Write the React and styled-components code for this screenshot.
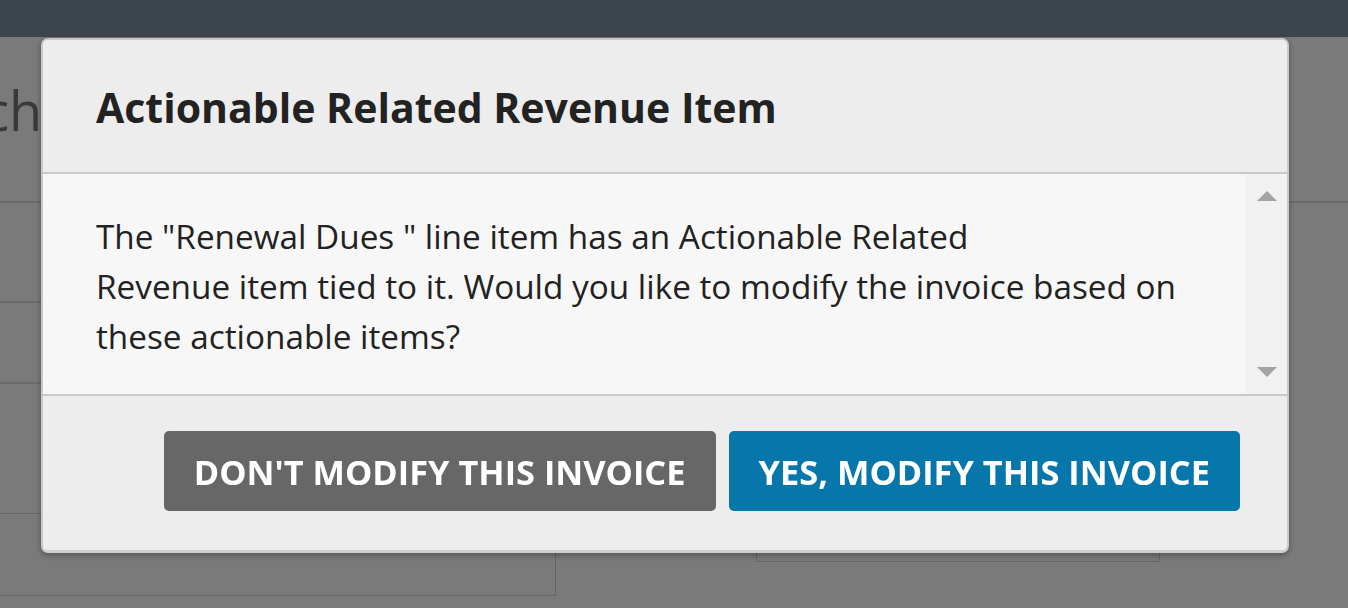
import React from 'react'
import styled, { createGlobalStyle } from 'styled-components'

const GlobalStyle = createGlobalStyle`
  html, body {
    margin: 0;
    padding: 0;
    background: #ffffff;
    font-family: "Open Sans", "Liberation Sans", sans-serif;
    overflow: hidden;
  }
  * { box-sizing: border-box; }
`

export default function App() {
  return (
    <>
      <GlobalStyle />
      <Page>
        <TopBar />
        <PageHead>
          <PageTitle>Batch</PageTitle>
        </PageHead>
        <Content>
          <LeftCol>
            <Row $h={98} $line={2} />
            <Row $h={79} $line={2} />
            <Row $h={129} $line={1} />
            <Panel />
          </LeftCol>
          <RightCol>
            <SideBox />
          </RightCol>
        </Content>
      </Page>

      <Overlay />

      <Modal role="dialog" aria-labelledby="modal-title">
        <Header>
          <Title id="modal-title">Actionable Related Revenue Item</Title>
        </Header>
        <Body>
          <Message>
            The "Renewal Dues " line item has an Actionable Related
            <br />
            Revenue item tied to it. Would you like to modify the invoice based on
            these actionable items?
          </Message>
          <Scrollbar>
            <Arrow viewBox="0 0 20 10">
              <polygon points="0,10 10,0 20,10" />
            </Arrow>
            <Arrow viewBox="0 0 20 10">
              <polygon points="0,0 20,0 10,10" />
            </Arrow>
          </Scrollbar>
        </Body>
        <Footer>
          <Button $variant="secondary">Don't modify this invoice</Button>
          <Button $variant="primary">Yes, modify this invoice</Button>
        </Footer>
      </Modal>
    </>
  )
}

// page behind the dialog
const Page = styled.div`
  width: 1348px;
  height: 608px;
  background: #ffffff;
`

const TopBar = styled.div`
  height: 37px;
  background: #8190a0;
`

const PageHead = styled.div`
  height: 164px;
  padding-top: 38px;
  overflow: hidden;
`

const PageTitle = styled.h1`
  margin: 0 0 0 -101px;
  font-size: 54px;
  font-weight: 400;
  line-height: 70px;
  color: #777777;
  white-space: nowrap;
`

const Content = styled.div`
  display: flex;
  border-top: 2px solid #e0e0e0;
`

const LeftCol = styled.div`
  width: 556px;
  display: flex;
  flex-direction: column;
`

const Row = styled.div`
  height: ${(p) => p.$h + p.$line}px;
  border-bottom: ${(p) => p.$line}px solid ${(p) => (p.$line > 1 ? '#e0e0e0' : '#d6d6d6')};
`

const Panel = styled.div`
  height: 82px;
  border-right: 1px solid #d6d6d6;
  border-bottom: 1px solid #d6d6d6;
`

const RightCol = styled.div`
  flex: 1;
  padding: 270px 0 0 200px;
`

const SideBox = styled.div`
  width: 404px;
  height: 89px;
  border: 1px solid #d6d6d6;
`

const Overlay = styled.div`
  position: fixed;
  inset: 0;
  background: rgba(0, 0, 0, 0.52);
`

// dialog
const Modal = styled.div`
  position: fixed;
  top: 38px;
  left: 41px;
  width: 1248px;
  border: 2px solid #c8c8c8;
  border-bottom-width: 3px;
  border-bottom-color: #d0d0d0;
  border-radius: 7px;
  background: #ededed;
  box-shadow: 0 2px 6px rgba(0, 0, 0, 0.35);
  overflow: hidden;
`

const Header = styled.div`
  height: 134px;
  padding: 2px 53px 0;
  display: flex;
  align-items: center;
  background: #ededed;
  border-bottom: 2px solid #c8c8c8;
`

const Title = styled.h2`
  margin: 0;
  font-size: 41px;
  font-weight: 700;
  color: #222222;
  line-height: 48px;
`

const Body = styled.div`
  height: 222px;
  display: flex;
  background: #f7f7f7;
  border-bottom: 2px solid #c8c8c8;
`

const Message = styled.p`
  flex: 1;
  margin: 0;
  padding: 37px 53px 0;
  font-size: 33.3px;
  line-height: 50px;
  color: #222222;
`

const Scrollbar = styled.div`
  width: 41px;
  display: flex;
  flex-direction: column;
  align-items: center;
  justify-content: space-between;
  padding: 17px 0 17px;
  background: #f1f1f1;
`

const Arrow = styled.svg`
  width: 20px;
  height: 10px;
  fill: #a3a3a3;
`

const Footer = styled.div`
  display: flex;
  justify-content: flex-end;
  gap: 13px;
  padding: 35px 47px 39px 0;
  background: #ededed;
`

const Button = styled.button`
  height: 80px;
  padding: 0 30px;
  border: none;
  border-radius: 5px;
  font-family: "Open Sans", "Liberation Sans", sans-serif;
  font-size: 34.4px;
  font-weight: 700;
  text-transform: uppercase;
  color: #ffffff;
  background: ${(p) => (p.$variant === 'primary' ? '#0776aa' : '#676767')};
  cursor: pointer;
`
